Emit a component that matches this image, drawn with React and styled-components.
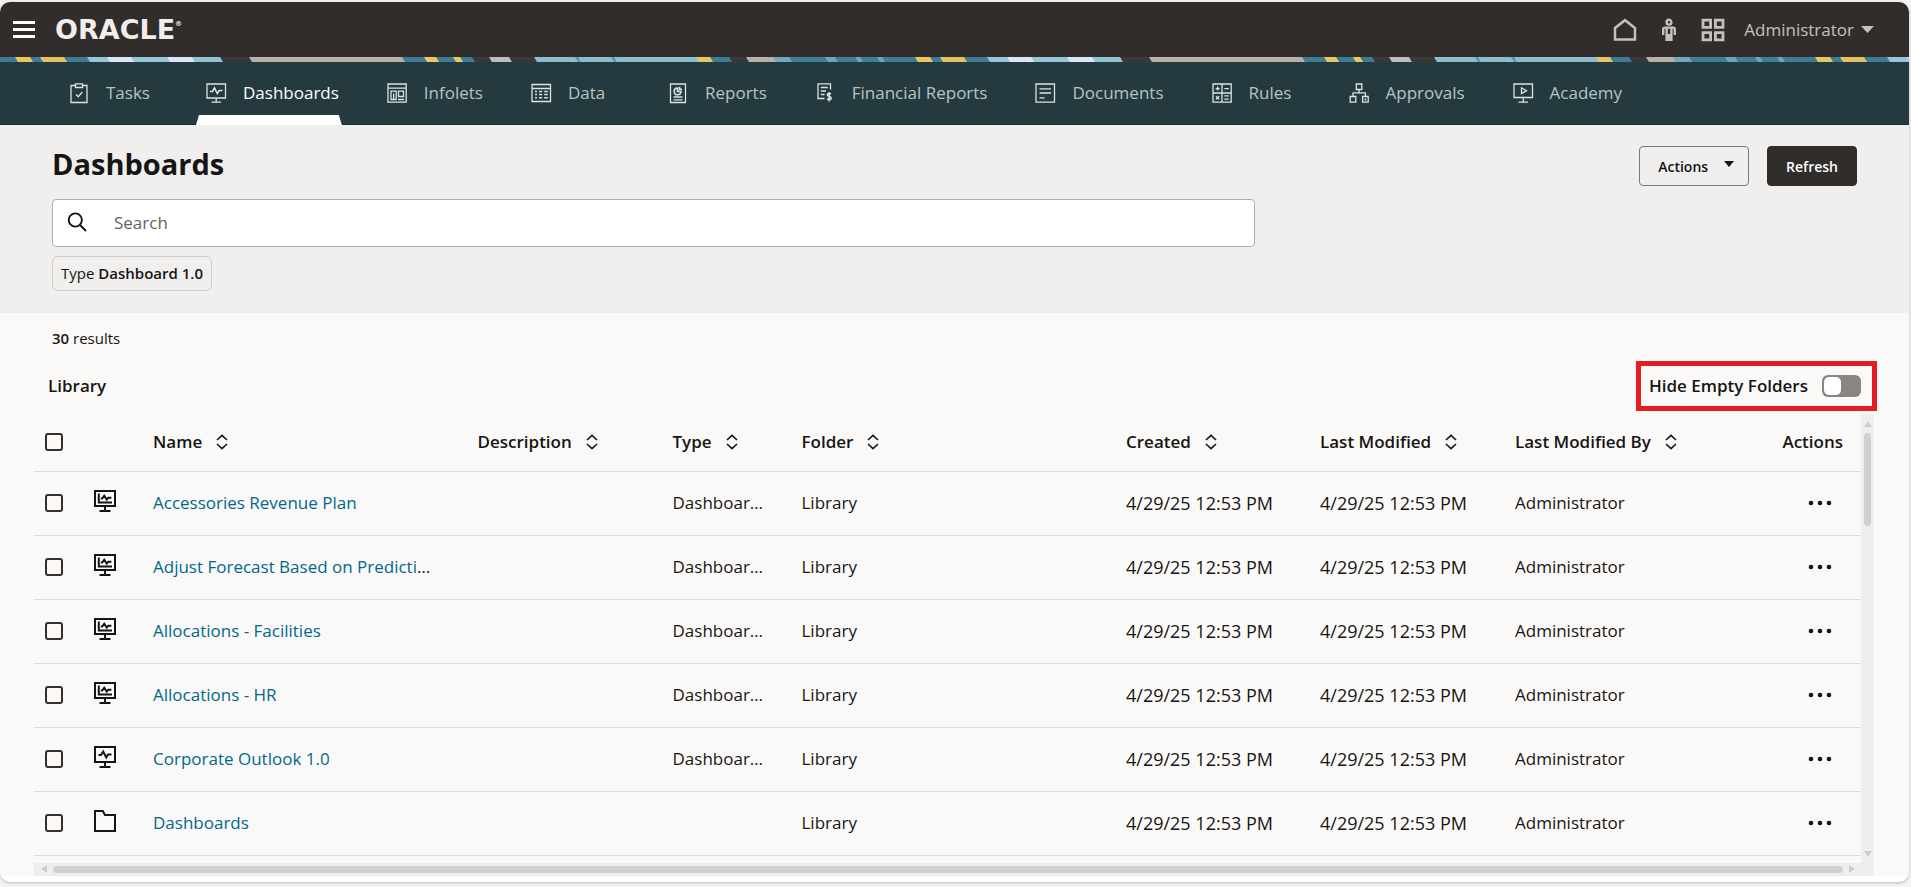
import React, { useState } from "react";
import styled, { createGlobalStyle, css } from "styled-components";

const GlobalStyle = createGlobalStyle`
  * {
    box-sizing: border-box;
  }
  body {
    margin: 0;
    background: #f3f3f3;
    font-family: "Open Sans", "Noto Sans", sans-serif;
    font-size: 17px;
    line-height: 24px;
    color: #161513;
  }
  button,
  input {
    font-family: inherit;
    color: inherit;
  }
`;

const Frame = styled.div`
  margin: 2px 2px 4px 0;
  padding-bottom: 6px;
  background: #ffffff;
  border-radius: 10px;
  box-shadow: 0 1px 3px rgba(0, 0, 0, 0.25);
  overflow: hidden;
`;

const Header = styled.header`
  display: flex;
  align-items: center;
  height: 55px;
  padding: 0 35px 0 13px;
  background: #312d2a;
  color: #c4c1be;
`;

const PlainButton = styled.button`
  display: flex;
  align-items: center;
  padding: 0;
  border: 0;
  background: none;
  font-size: 17px;
  line-height: 24px;
  cursor: pointer;
`;

const Logo = styled.a`
  display: flex;
  align-items: flex-start;
  margin-left: 20px;
  font-family: "DejaVu Sans", sans-serif;
  font-weight: 700;
  font-size: 27px;
  line-height: 30px;
  color: #f1efed;
  text-decoration: none;

  sup {
    font-size: 7px;
    line-height: 18px;
  }
`;

const HeaderTools = styled.div`
  display: flex;
  align-items: center;
  gap: 24px;
  margin-left: auto;
`;

const UserButton = styled(PlainButton)`
  gap: 7px;
  margin-left: -5px;
`;

const Stripe = styled.svg`
  display: block;
  width: 100%;
  height: 5px;
`;

const Nav = styled.nav`
  display: flex;
  gap: 35px;
  height: 63px;
  padding-left: 59px;
  background: #243a3f;
  border-bottom: 1px solid #203236;
`;

const NavItem = styled.a`
  position: relative;
  display: flex;
  align-items: center;
  gap: 15px;
  min-width: 102px;
  padding: 0 3px 0 8px;
  color: ${({ $active }) => ($active ? "#ffffff" : "#b9c3c4")};
  text-decoration: none;
  white-space: nowrap;

  svg {
    flex: none;
    color: #dbe4e5;
  }

  ${({ $active }) =>
    $active &&
    css`
      &::after {
        content: "";
        position: absolute;
        left: 0;
        right: 0;
        bottom: -1px;
        height: 10px;
        background: #ffffff;
        clip-path: polygon(3px 0, calc(100% - 3px) 0, 100% 100%, 0 100%);
      }
    `}
`;

const PageHead = styled.section`
  padding: 20px 52px 22px;
  background: #f0efed;
`;

const TitleRow = styled.div`
  display: flex;
  align-items: center;
  justify-content: space-between;
  height: 42px;
`;

const Title = styled.h1`
  margin: 0 0 4px;
  font-size: 29px;
  line-height: 36px;
  font-weight: 700;
`;

const Buttons = styled.div`
  display: flex;
  gap: 18px;
`;

const Button = styled.button`
  display: flex;
  align-items: center;
  gap: 16px;
  height: 40px;
  padding: 0 ${({ $primary }) => ($primary ? "18px" : "14px 0 18px")};
  border: 1px solid ${({ $primary }) => ($primary ? "#312d2a" : "#7d7a77")};
  border-radius: 4px;
  background: ${({ $primary }) => ($primary ? "#312d2a" : "transparent")};
  color: ${({ $primary }) => ($primary ? "#ffffff" : "#161513")};
  font-size: 14px;
  font-weight: 600;
  cursor: pointer;

  svg {
    margin-bottom: 4px;
  }
`;

const SearchBox = styled.label`
  display: flex;
  align-items: center;
  gap: 27px;
  width: calc(100% * 2 / 3);
  height: 48px;
  margin-top: 12px;
  padding: 0 14px 2px;
  border: 1px solid #b1afad;
  border-radius: 4px;
  background: #ffffff;
`;

const SearchInput = styled.input`
  flex: 1;
  min-width: 0;
  padding: 0;
  border: 0;
  outline: 0;
  background: none;
  font-size: 17px;

  &::placeholder {
    color: #65625f;
    opacity: 1;
  }
`;

const Chip = styled.button`
  display: block;
  height: 35px;
  margin-top: 9px;
  padding: 0 8px 2px;
  border: 1px solid #d0cdca;
  border-radius: 6px;
  background: transparent;
  font-size: 15px;
  line-height: 24px;
  cursor: pointer;

  b {
    font-weight: 600;
  }
`;

const Content = styled.main`
  padding: 13px 35px 0 34px;
  background: #fbf9f8;
`;

const Results = styled.p`
  margin: 0;
  padding-left: 18px;
  font-size: 15px;
  line-height: 24px;

  b {
    font-weight: 600;
  }
`;

const LibraryBar = styled.div`
  display: flex;
  align-items: center;
  justify-content: space-between;
  margin: 11px -3px 3px 0;
  padding-left: 14px;
`;

const LibraryTitle = styled.h2`
  margin: 0;
  font-size: 17px;
  line-height: 24px;
  font-weight: 600;
`;

const Highlight = styled.label`
  display: flex;
  align-items: center;
  gap: 14px;
  height: 50px;
  padding: 0 11px 0 8px;
  border: 5px solid #e51c23;
  font-weight: 600;
  cursor: pointer;
`;

const Switch = styled.input`
  appearance: none;
  display: flex;
  align-items: center;
  width: 39px;
  height: 22px;
  margin: 0;
  padding: 0 2px;
  border-radius: 6px;
  background: #8b8580;
  cursor: pointer;

  &::before {
    content: "";
    width: 17px;
    height: 18px;
    border-radius: 5px;
    background: #ffffff;
  }

  &:checked {
    justify-content: flex-end;
    background: #36677d;
  }
`;

const TableShell = styled.div`
  display: grid;
  grid-template-columns: minmax(0, 1fr) 13px;
  grid-template-rows: auto 13px;
`;

const TableArea = styled.div`
  overflow: hidden;
  padding-bottom: 7px;
`;

const Table = styled.table`
  width: 100%;
  table-layout: fixed;
  border-collapse: collapse;
`;

const Col = styled.col`
  width: ${({ $width }) => ($width ? `${$width}px` : "auto")};
`;

const Cell = styled.td`
  height: 64px;
  padding: 0 ${({ $tight }) => ($tight ? "0" : "18px")};
  border-bottom: 1px solid #dedcda;
  font-size: ${({ $date }) => ($date ? "18px" : "17px")};
  text-align: ${({ $align }) => $align || "left"};
  white-space: nowrap;
  overflow: hidden;
  text-overflow: ellipsis;
`;

const NameCell = styled(Cell)`
  padding-right: 26px;
`;

const HeadCell = styled(Cell)`
  height: 57px;
  font-weight: 600;
`;

const HeadLabel = styled.span`
  display: flex;
  align-items: center;
  gap: 14px;

  svg {
    flex: none;
  }
`;

const Checkbox = styled.input`
  appearance: none;
  display: block;
  width: 18px;
  height: 18px;
  margin: 0 0 0 11px;
  border: 2px solid #33302e;
  border-radius: 3px;
  background: transparent;
  cursor: pointer;

  &:checked {
    background: #33302e;
  }
`;

const RowIcon = styled.svg`
  display: block;
  margin: -4px 0 0 20px;
`;

const NameLink = styled.a`
  color: #00688c;
  text-decoration: none;
`;

const MoreButton = styled(PlainButton)`
  justify-content: center;
  width: 46px;
  height: 32px;
  margin-left: auto;
`;

const Track = styled.div`
  display: flex;
  flex-direction: ${({ $horizontal }) => ($horizontal ? "row" : "column")};
  align-items: center;
  gap: 6px;
  padding: ${({ $horizontal }) => ($horizontal ? "0 19px 0 7px" : "7px 0 6px")};
  background: #efeeec;
  color: #cfcdca;

  ${({ $horizontal }) =>
    $horizontal &&
    css`
      grid-column: 1 / -1;
    `}
`;

const Thumb = styled.div`
  width: 7px;
  height: 93px;
  border-radius: 4px;
  background: #d2d0ce;
`;

const WideThumb = styled(Thumb)`
  flex: 1;
  height: 7px;
`;

const EndArrow = styled.svg`
  margin-top: auto;
`;

// [start, end, colour] along the 900px repeat of the banner
const bands = [
  [-4, 16, "#3d7b96"],
  [16, 31, "#ecc75f"],
  [31, 41, "#3d7b96"],
  [41, 65, "#e6c260"],
  [65, 88, "#3d7b96"],
  [88, 108, "#97c6d8"],
  [108, 132, "#d9e7f2"],
  [132, 168, "#97c6d8"],
  [168, 193, "#d9e7f2"],
  [193, 221, "#93c2d3"],
  [221, 250, "#3d3835"],
  [250, 403, "#b8afad"],
  [403, 425, "#3d7b96"],
  [425, 437, "#ecc75f"],
  [437, 454, "#3d7b96"],
  [454, 461, "#ecc75f"],
  [461, 473, "#3d7b96"],
  [473, 490, "#3d3835"],
  [490, 510, "#c3babb"],
  [510, 535, "#3d3835"],
  [535, 576, "#8dbccd"],
  [576, 579, "#5b93aa"],
  [579, 612, "#8dbccd"],
  [612, 615, "#5b93aa"],
  [615, 697, "#8dbccd"],
  [697, 711, "#e3c566"],
  [711, 730, "#3d7b96"],
  [730, 747, "#3d3835"],
  [747, 774, "#b8afad"],
  [774, 790, "#71a9bf"],
  [790, 826, "#3f7e98"],
  [826, 836, "#6aa5bd"],
  [836, 856, "#3f7e98"],
  [856, 861, "#6aa5bd"],
  [861, 878, "#3f7e98"],
  [878, 883, "#6aa5bd"],
  [883, 904, "#3d7b96"],
];

const Banner = () => (
  <Stripe aria-hidden="true">
    <defs>
      <pattern id="bands" width="900" height="5" patternUnits="userSpaceOnUse">
        {bands.map(([from, to, fill]) => (
          <polygon
            key={from}
            fill={fill}
            points={`${from - 1},0 ${to},0 ${to + 3},5 ${from + 2},5`}
          />
        ))}
      </pattern>
    </defs>
    <rect width="100%" height="5" fill="url(#bands)" />
  </Stripe>
);

const NavIcon = ({ children }) => (
  <svg width="24" height="24" viewBox="0 0 24 24" fill="none" stroke="currentColor" strokeWidth="1.3">
    {children}
  </svg>
);

const navItems = [
  {
    label: "Tasks",
    icon: (
      <>
        <path d="M8.5 4.5H4V21.5H20V4.5H15.5" />
        <path d="M8.5 2.8H15.5V6.5H8.5Z" />
        <path d="M9 13.5L11.2 15.7L15.3 11" />
      </>
    ),
  },
  {
    label: "Dashboards",
    active: true,
    icon: (
      <>
        <path d="M3 3H21.5V17H3ZM12.2 17V20.8M7.5 21.2H17" />
        <path d="M6 10.5H8.5L10.5 7L13.3 12.5L15.3 9.5H18.5" strokeWidth="1.6" />
      </>
    ),
  },
  {
    label: "Infolets",
    icon: (
      <>
        <path d="M3 3H21.2V21.2H3ZM3 7.2H21.2" />
        <path d="M6 10.2H11.2V18.5H6ZM13.5 10.2H18.5V15.5H13.5ZM13 18.5H19M8.6 12.5V18.5" />
      </>
    ),
  },
  {
    label: "Data",
    icon: (
      <>
        <path d="M3 3.5H21.5V20.5H3Z" />
        <path d="M3 7.5H21.5" />
        <path d="M6 10.5H8M6 13.5H8M6 16.8H8M10 10.5H13.2M10 13.5H13.2M10 16.8H13.2M15.2 10.5H18.8M15.2 13.5H18.8M15.2 16.8H18.8" strokeWidth="1.6" />
      </>
    ),
  },
  {
    label: "Reports",
    icon: (
      <>
        <path d="M4.5 3H19.5V21.5H4.5Z" />
        <path d="M11.5 7A3.4 3.4 0 1 0 15 10.5H11.5ZM13.6 5.8V8.4H16" strokeWidth="1.6" />
        <path d="M7.5 16H16.5M7.5 18.8H16.5" />
      </>
    ),
  },
  {
    label: "Financial Reports",
    icon: (
      <>
        <path d="M17.5 8.5V2.8H5V17.5H11.5" />
        <path d="M7.8 6.5H14.8M7.8 10H13M7.8 13.5H11.5" />
        <path d="M18 13.2C16.5 11.8 14.2 12.6 14.3 14C14.4 15.8 18.2 15.2 18.3 17.2C18.3 18.8 15.5 19.2 14 17.7M16.2 11V20.5" strokeWidth="1.5" />
      </>
    ),
  },
  {
    label: "Documents",
    icon: <path d="M3 3H21.5V21.2H3ZM6.5 7.8H18M6.5 12H18M6.5 16.8H11.5" />,
  },
  {
    label: "Rules",
    icon: (
      <>
        <path d="M3 3H21.2V21.2H3ZM12 3V21.2M3 12H21.2" />
        <path d="M5.6 7.6H9.6M7.6 5.6V9.6M14.3 7.6H18.8M6 15.2L9.2 18.4M9.2 15.2L6 18.4M14.3 14.8H18.8M14.3 18.2H18.8" />
      </>
    ),
  },
  {
    label: "Approvals",
    icon: (
      <>
        <path d="M9.3 3H14.8V8.5H9.3ZM3.2 15.5H8.8V21.2H3.2ZM15.6 15.5H21.2V21.2H15.6Z" />
        <path d="M12 8.5V11.8M6 15.5V11.8H18.4V15.5" />
        <path d="M17.6 18.4H19.2" strokeWidth="2" />
      </>
    ),
  },
  {
    label: "Academy",
    icon: (
      <>
        <path d="M3 3H21.5V16.5H3ZM12.2 16.5V20.8M7.5 21.2H17" />
        <path d="M10.5 6.8V12.6L15.5 9.7Z" />
      </>
    ),
  },
];

const Caret = ({ width = 10, height = 6 }) => (
  <svg width={width} height={height} viewBox="0 0 10 6" preserveAspectRatio="none" fill="currentColor">
    <path d="M0 0H10L5 6Z" />
  </svg>
);

const SortIcon = () => (
  <svg width="12" height="16" viewBox="0 0 12 16" fill="none" stroke="#161513" strokeWidth="1.6">
    <path d="M1 6L6 1.3L11 6M1 10L6 14.7L11 10" />
  </svg>
);

const icons = {
  chart: (
    <>
      <path d="M1 1H21V16H1ZM11 16V21M5.5 21H16.5" strokeWidth="2" />
      <path d="M4.8 3.5V12.6H18" strokeWidth="2" />
      <path d="M6.8 8.5H8.2L10.2 5.8L12.8 9.6L14.3 7.8H17.4" strokeWidth="2" />
    </>
  ),
  pulse: (
    <>
      <path d="M1 1H21V16H1ZM11 16V21M5.5 21H16.5" strokeWidth="2" />
      <path d="M4.5 9H7L9.2 5.5L12.2 11.5L14 8.5H17.5" strokeWidth="2" />
    </>
  ),
  folder: <path d="M1 1H8.8L11 5H21V21H1Z" strokeWidth="2" />,
};

const columns = [
  { label: "Name" },
  { label: "Description", width: 195 },
  { label: "Type", width: 129 },
  { label: "Folder" },
  { label: "Created", width: 194 },
  { label: "Last Modified", width: 195 },
  { label: "Last Modified By", width: 204 },
];

const rows = [
  { name: "Accessories Revenue Plan", type: "Dashboard 1.0", icon: "chart" },
  { name: "Adjust Forecast Based on Predictions", type: "Dashboard 1.0", icon: "chart" },
  { name: "Allocations - Facilities", type: "Dashboard 1.0", icon: "chart" },
  { name: "Allocations - HR", type: "Dashboard 1.0", icon: "chart" },
  { name: "Corporate Outlook 1.0", type: "Dashboard 1.0", icon: "pulse" },
  { name: "Dashboards", type: "", icon: "folder" },
];

const stamp = "4/29/25 12:53 PM";

const shorten = (text, max = 8) => (text.length > max ? `${text.slice(0, max)}…` : text);

function TopBar() {
  return (
    <Header>
      <PlainButton aria-label="Navigator">
        <svg width="22" height="17" viewBox="0 0 22 17" fill="#ffffff">
          <path d="M0 0H22V3H0ZM0 7H22V10H0ZM0 14H22V17H0Z" />
        </svg>
      </PlainButton>
      <Logo href="#home">
        ORACLE<sup>®</sup>
      </Logo>
      <HeaderTools>
        <PlainButton aria-label="Home">
          <svg width="24" height="24" viewBox="0 0 24 24" fill="none" stroke="#c4c1be" strokeWidth="2.5">
            <path d="M2 10L12 2.2L22 10V21.6H2Z" />
          </svg>
        </PlainButton>
        <PlainButton aria-label="Accessibility">
          <svg width="16" height="24" viewBox="0 0 16 24" fill="none" stroke="#c4c1be" strokeWidth="2.4">
            <circle cx="8" cy="4.2" r="2.4" />
            <path d="M5.6 23V10.5M10.4 23V10.5M8 16V23M2.2 17V11.5Q2.2 9.6 4 9.6H12Q13.8 9.6 13.8 11.5V17" />
          </svg>
        </PlainButton>
        <PlainButton aria-label="Applications">
          <svg width="24" height="24" viewBox="0 0 24 24" fill="none" stroke="#c4c1be" strokeWidth="2.8">
            <path d="M2 2.2H9.6V9.4H2ZM14.4 2.2H22V9.4H14.4ZM2 14.6H9.6V21.8H2ZM14.4 14.6H22V21.8H14.4Z" />
          </svg>
        </PlainButton>
        <UserButton aria-haspopup="menu">
          Administrator
          <Caret width={13} height={7} />
        </UserButton>
      </HeaderTools>
    </Header>
  );
}

function Library() {
  const [hideEmpty, setHideEmpty] = useState(false);

  return (
    <Content>
      <Results>
        <b>30</b> results
      </Results>
      <LibraryBar>
        <LibraryTitle>Library</LibraryTitle>
        <Highlight>
          Hide Empty Folders
          <Switch
            type="checkbox"
            role="switch"
            checked={hideEmpty}
            onChange={(e) => setHideEmpty(e.target.checked)}
          />
        </Highlight>
      </LibraryBar>
      <TableShell>
        <TableArea>
          <Table>
            <colgroup>
              <Col $width={40} />
              <Col $width={61} />
              {columns.map((column) => (
                <Col key={column.label} $width={column.width} />
              ))}
              <Col $width={160} />
            </colgroup>
            <thead>
              <tr>
                <HeadCell as="th" $tight>
                  <Checkbox type="checkbox" aria-label="Select all" />
                </HeadCell>
                <HeadCell as="th" $tight />
                {columns.map((column) => (
                  <HeadCell as="th" key={column.label}>
                    <HeadLabel>
                      {column.label}
                      <SortIcon />
                    </HeadLabel>
                  </HeadCell>
                ))}
                <HeadCell as="th" $align="right">
                  Actions
                </HeadCell>
              </tr>
            </thead>
            <tbody>
              {rows.map((row) => (
                <tr key={row.name}>
                  <Cell $tight>
                    <Checkbox type="checkbox" aria-label={`Select ${row.name}`} />
                  </Cell>
                  <Cell $tight>
                    <RowIcon width="22" height="22" viewBox="0 0 22 22" fill="none" stroke="#161513">
                      {icons[row.icon]}
                    </RowIcon>
                  </Cell>
                  <NameCell>
                    <NameLink href="#open">{row.name}</NameLink>
                  </NameCell>
                  <Cell />
                  <Cell title={row.type}>{shorten(row.type)}</Cell>
                  <Cell>Library</Cell>
                  <Cell $date>{stamp}</Cell>
                  <Cell $date>{stamp}</Cell>
                  <Cell>Administrator</Cell>
                  <Cell>
                    <MoreButton aria-label={`Actions for ${row.name}`}>
                      <svg width="24" height="6" viewBox="0 0 24 6" fill="#161513">
                        <circle cx="3" cy="3" r="2.3" />
                        <circle cx="12" cy="3" r="2.3" />
                        <circle cx="21" cy="3" r="2.3" />
                      </svg>
                    </MoreButton>
                  </Cell>
                </tr>
              ))}
            </tbody>
          </Table>
        </TableArea>
        <Track>
          <svg width="8" height="6" viewBox="0 0 8 6" fill="currentColor">
            <path d="M0 6L4 0L8 6Z" />
          </svg>
          <Thumb />
          <EndArrow width="8" height="6" viewBox="0 0 8 6" fill="currentColor">
            <path d="M0 0L4 6L8 0Z" />
          </EndArrow>
        </Track>
        <Track $horizontal>
          <svg width="6" height="8" viewBox="0 0 6 8" fill="currentColor">
            <path d="M6 0L0 4L6 8Z" />
          </svg>
          <WideThumb />
          <svg width="6" height="8" viewBox="0 0 6 8" fill="currentColor">
            <path d="M0 0L6 4L0 8Z" />
          </svg>
        </Track>
      </TableShell>
    </Content>
  );
}

function App() {
  return (
    <>
      <GlobalStyle />
      <Frame>
        <TopBar />
        <Banner />
        <Nav>
          {navItems.map(({ label, icon, active }) => (
            <NavItem key={label} href={`#${label}`} $active={active}>
              <NavIcon>{icon}</NavIcon>
              {label}
            </NavItem>
          ))}
        </Nav>
        <PageHead>
          <TitleRow>
            <Title>Dashboards</Title>
            <Buttons>
              <Button aria-haspopup="menu">
                Actions
                <Caret />
              </Button>
              <Button $primary>Refresh</Button>
            </Buttons>
          </TitleRow>
          <SearchBox>
            <svg width="20" height="20" viewBox="0 0 20 20" fill="none" stroke="#161513" strokeWidth="1.9">
              <circle cx="8.3" cy="8" r="6.6" />
              <path d="M13 13L19 19" />
            </svg>
            <SearchInput type="search" placeholder="Search" aria-label="Search" />
          </SearchBox>
          <Chip>
            Type <b>Dashboard 1.0</b>
          </Chip>
        </PageHead>
        <Library />
      </Frame>
    </>
  );
}

export default App;
